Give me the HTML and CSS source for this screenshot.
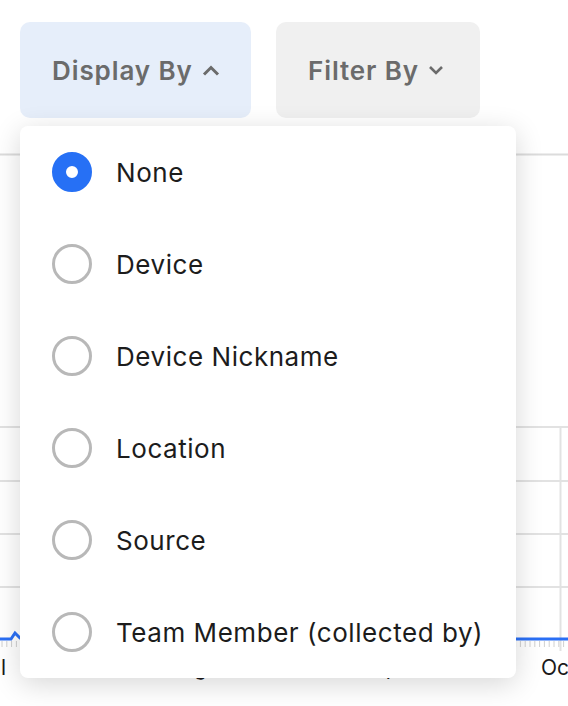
FILE: index.html
```html
<!DOCTYPE html>
<html>
<head>
<meta charset="utf-8">
<link rel="stylesheet" href="styles.css">
</head>
<body>
<div class="page">
  <div class="toolbar">
    <button class="btn btn-active"><span>Display By</span>
      <svg class="chev" width="18" height="11" viewBox="0 0 18 11"><path d="M2 9.5 L9 2.5 L16 9.5" fill="none" stroke="#6b6b6b" stroke-width="3"/></svg>
    </button>
    <button class="btn"><span>Filter By</span>
      <svg class="chev" width="16" height="10" viewBox="0 0 16 10"><path d="M2 2 L8 8 L14 2" fill="none" stroke="#6b6b6b" stroke-width="2.6"/></svg>
    </button>
  </div>
  <svg class="chart" width="568" height="588" viewBox="0 0 568 588">
    <line x1="0" y1="36.5" x2="568" y2="36.5" stroke="#dcdcdc" stroke-width="2"/>
    <g stroke="#e2e2e2" stroke-width="2">
      <line x1="0" y1="309" x2="568" y2="309"/>
      <line x1="0" y1="363" x2="568" y2="363"/>
      <line x1="0" y1="416" x2="568" y2="416"/>
      <line x1="0" y1="469" x2="568" y2="469"/>
      <line x1="560.5" y1="309" x2="560.5" y2="533"/>
    </g>
    <g stroke="#d0d0d0" stroke-width="1" id="ticks"></g>
    <polyline points="0,521 11,521 15,515 20,520 568,521" fill="none" stroke="#2a6ff5" stroke-width="3"/>
    <g class="lbl">
      <text x="6" y="557" text-anchor="end">Jul</text>
      <text x="167" y="557">Aug</text>
      <text x="360" y="557">Sep</text>
      <text x="541" y="557">Oct</text>
    </g>
  </svg>
  <div class="menu">
    <div class="item"><span class="radio radio-on"></span><span>None</span></div>
    <div class="item"><span class="radio"></span><span>Device</span></div>
    <div class="item"><span class="radio"></span><span>Device Nickname</span></div>
    <div class="item"><span class="radio"></span><span>Location</span></div>
    <div class="item"><span class="radio"></span><span>Source</span></div>
    <div class="item"><span class="radio"></span><span>Team Member (collected by)</span></div>
  </div>
</div>
<script>
  var g = document.getElementById('ticks');
  for (var x = 2; x < 568; x += 4.8) {
    var l = document.createElementNS('http://www.w3.org/2000/svg', 'line');
    l.setAttribute('x1', x); l.setAttribute('x2', x);
    l.setAttribute('y1', 523); l.setAttribute('y2', 529);
    g.appendChild(l);
  }
</script>
</body>
</html>
```
FILE: styles.css
```css
html, body {
  margin: 0;
  padding: 0;
  background: #fff;
}
body {
  font-family: Inter, "Noto Sans", sans-serif;
  width: 568px;
  height: 706px;
  overflow: hidden;
}
.page {
  position: relative;
}
.toolbar {
  display: flex;
  gap: 25px;
  padding: 22px 0 0 20px;
  height: 96px;
}
.btn {
  box-sizing: border-box;
  display: flex;
  align-items: center;
  justify-content: flex-start;
  gap: 9px;
  height: 96px;
  padding: 0 0 0 32px;
  border: none;
  border-radius: 10px;
  background: #f0f0f0;
  color: #6b6b6b;
  font-family: Inter, "Noto Sans", sans-serif;
  font-size: 26px;
  font-weight: 600;
  letter-spacing: 0.9px;
  white-space: nowrap;
}
.chev {
  flex: none;
}
.btn-active {
  background: #e6eefa;
  width: 231px;
}
.btn:not(.btn-active) {
  width: 204px;
}
.chart {
  display: block;
}
.lbl text {
  font-family: Inter, "Noto Sans", sans-serif;
  font-size: 21px;
  fill: #1a1a1a;
}
.menu {
  position: absolute;
  left: 20px;
  top: 126px;
  width: 496px;
  background: #fff;
  border-radius: 8px;
  box-shadow: 0 6px 28px rgba(0, 0, 0, 0.16);
}
.item {
  display: flex;
  align-items: center;
  gap: 24px;
  height: 92px;
  padding-left: 32px;
  font-size: 26px;
  letter-spacing: 0.55px;
  color: #1c1c1c;
}
.radio {
  box-sizing: border-box;
  width: 40px;
  height: 40px;
  border-radius: 50%;
  border: 3px solid #b8b8b8;
  flex: none;
}
.radio-on {
  border: 14px solid #2670f5;
  background: #fff;
}
```
